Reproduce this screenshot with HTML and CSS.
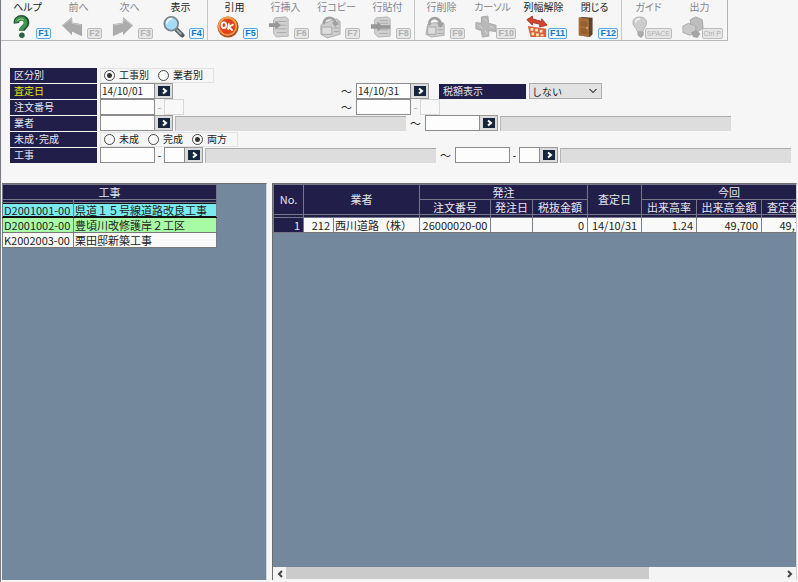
FILE: index.html
```html
<!DOCTYPE html>
<html lang="ja">
<head>
<meta charset="utf-8">
<meta name="viewport" content="width=device-width, initial-scale=1">
<title>査定入力</title>
<link rel="stylesheet" href="styles.css">
</head>
<body>
<div class="window">
<header class="toolbar">
  <div class="group">
    <button class="tool"><span class="name">ヘルプ</span>
      <svg class="icon" viewBox="0 0 24 24"><path d="M7 8C6 0 19 0 18 8c0 4-5 4-5 8" fill="none" stroke="#244d38" stroke-width="6"/><path d="M7 7C7 1 18 1 17 8c0 4-5 4-5 8" fill="none" stroke="#3d9a4d" stroke-width="4"/><circle cx="13" cy="21" r="3" fill="#2c6142"/><path d="M8 5q3-3 7-1" stroke="#a3d68a" fill="none"/></svg>
      <kbd class="key">F1</kbd></button>
    <button class="tool" disabled><span class="name">前へ</span>
      <svg class="icon" viewBox="0 0 24 24"><path d="M1 10 12 1v6l11 2v13l-5-2-6-3v4z" fill="#a9a9a9"/><path d="M2 10 12 3v5l10 2" fill="none" stroke="#c9c9c9"/></svg>
      <kbd class="key">F2</kbd></button>
    <button class="tool" disabled><span class="name">次へ</span>
      <svg class="icon" viewBox="0 0 24 24"><path d="M23 10 12 1v6L1 9v13l5-2 6-3v4z" fill="#acacac"/><path d="M22 10 12 3v5L2 10" fill="none" stroke="#cfcfcf"/></svg>
      <kbd class="key">F3</kbd></button>
    <button class="tool"><span class="name">表示</span>
      <svg class="icon" viewBox="0 0 24 24"><path d="m14 14 7 7" stroke="#555b62" stroke-width="5" stroke-linecap="round"/><path d="m15 15 5 5" stroke="#a9adb2" stroke-width="2"/><circle cx="9" cy="8.500" r="7.500" fill="#a5dcf7" stroke="#7c8791" stroke-width="2"/><path d="M4 8q1-5 6-5" stroke="#eefaff" stroke-width="2" fill="none"/></svg>
      <kbd class="key">F4</kbd></button>
  </div>
  <div class="group">
    <button class="tool"><span class="name">引用</span>
      <svg class="icon" viewBox="0 0 24 24"><circle cx="12" cy="12" r="11.500" fill="#a84a20"/><circle cx="11.500" cy="11" r="10.500" fill="#f3a04c"/><circle cx="11.500" cy="11.500" r="8.500" fill="#e2441a"/><g fill="none" stroke="#fff" stroke-width="2"><ellipse cx="7.500" cy="10" rx="2.500" ry="3"/><path d="m13 8-1 7M18 9l-5 3 4 4"/></g></svg>
      <kbd class="key">F5</kbd></button>
    <button class="tool" disabled><span class="name">行挿入</span>
      <svg class="icon" viewBox="0 0 24 24"><path d="m8 2 11-1 3 2v19l-13 1-3-4V4z" fill="#d0d0d0" stroke="#b2b2b2"/><path d="M10 6h10M10 10h10M10 14h10M10 18h10" stroke="#a9a9a9"/><path d="M1 8h7V5l6 5-6 5v-3H1z" fill="#979797"/></svg>
      <kbd class="key">F6</kbd></button>
    <button class="tool" disabled><span class="name">行コピー</span>
      <svg class="icon" viewBox="0 0 24 24"><path d="m5 8 14-5 4 3v14l-14 4-7-4V10z" fill="#cecece" stroke="#adadad"/><path d="M3 12h11v8H3zM16 9h6M16 13h6M16 17h6" fill="#ddd" stroke="#a5a5a5"/><path d="M5 9C6 0 17 0 18 8" fill="none" stroke="#a0a0a0" stroke-width="3"/><path d="m14 7 4 5 4-6z" fill="#a0a0a0"/></svg>
      <kbd class="key">F7</kbd></button>
    <button class="tool" disabled><span class="name">行貼付</span>
      <svg class="icon" viewBox="0 0 24 24"><path d="m7 2 12-1 3 2v19l-13 1-4-4V4z" fill="#d0d0d0" stroke="#b2b2b2"/><path d="M10 5h10M10 8h10M10 15h10M10 19h10" stroke="#aaa"/><path d="M12 10h10v4H12zM1 9h7V6l6 6-6 5v-3H1z" fill="#979797"/></svg>
      <kbd class="key">F8</kbd></button>
  </div>
  <div class="group">
    <button class="tool" disabled><span class="name">行削除</span>
      <svg class="icon" viewBox="0 0 24 24"><path d="m4 9 14-3 4 3v12l-14 2-6-3z" fill="#cecece" stroke="#adadad"/><path d="M4 12h9v8H4zM15 11h6M15 15h6M15 19h6" fill="#ddd" stroke="#a5a5a5"/><path d="M6 10C4 0 18 0 18 9" fill="none" stroke="#a0a0a0" stroke-width="3"/><path d="m14 8 4 5 4-6z" fill="#a0a0a0"/></svg>
      <kbd class="key">F9</kbd></button>
    <button class="tool" disabled><span class="name">カーソル</span>
      <svg class="icon" viewBox="0 0 24 24"><path d="m7 1 7-1 1 8 8 2v7l-8-1v6l-7 1-1-7-6-2V7l6 1z" fill="#b8b8b8" stroke="#a8a8a8"/><path d="m10 3 3 3M4 10l4 3M11 16l2 4M16 11l4 2" stroke="#ddd"/></svg>
      <kbd class="key">F10</kbd></button>
    <button class="tool"><span class="name">列幅解除</span>
      <svg class="icon" viewBox="0 0 24 24"><path d="M2 11 22 14v9L5 23z" fill="#d7613e"/><path d="M5 13h3v3H5zM10 14h3v3h-3zM15 15h3v3h-3zM6 18h3v3H6zM11 19h3v3h-3zM16 20h3v2h-3z" fill="#ffe8b4"/><path d="m1 4 6-4v3l10 3V3l6 7-8 2V9L7 7v3z" fill="#d54530" stroke="#9e382b"/></svg>
      <kbd class="key">F11</kbd></button>
    <button class="tool"><span class="name">閉じる</span>
      <svg class="icon" viewBox="0 0 24 24"><path d="m2 2 4-1 11 1v18l-3 3-12-2z" fill="#5e432d"/><path d="m2 2 11 1v20L2 21z" fill="#a76e37"/><path d="m4 5 7 1v6l-7-1zM4 13l7 1v6l-7-1z" fill="#95602e"/><circle cx="11" cy="13" r="1" fill="#e0c080"/></svg>
      <kbd class="key">F12</kbd></button>
  </div>
  <div class="group">
    <button class="tool" disabled><span class="name">ガイド</span>
      <svg class="icon" viewBox="0 0 24 24"><path d="M7 17C6 12 2 12 2 7c0-8 15-8 15 0 0 5-3 5-4 10z" fill="#cdcdcd" stroke="#b2b2b2"/><path d="M7 17h7v4l-3 3-4-3z" fill="#aaa"/><path d="M5 7q1-4 5-4" stroke="#eee" stroke-width="2" fill="none"/></svg>
      <kbd class="key">SPACE</kbd></button>
    <button class="tool" disabled><span class="name">出力</span>
      <svg class="icon" viewBox="0 0 24 24"><path d="m9 4 6-3 7 3 1 9-7 5-6-3z" fill="#bdbdbd" stroke="#a3a3a3"/><path d="m1 11 6-3 8 3v6l-6 4-8-3z" fill="#c9c9c9" stroke="#a9a9a9"/><path d="m10 18 5-3 5 4-3 5-5-1z" fill="#a5a5a5"/></svg>
      <kbd class="key">Ctrl P</kbd></button>
  </div>
</header>

<form class="criteria">
  <div class="row">
    <span class="label">区分別</span>
    <div class="choices">
      <label><input type="radio" name="kind" checked>工事別</label>
      <label><input type="radio" name="kind">業者別</label>
    </div>
  </div>
  <div class="row">
    <label class="label active" for="date-from">査定日</label>
    <div class="span wide">
      <input class="box" id="date-from" value="14/10/01"><button type="button" class="pick" aria-label="開始日を選択"><svg viewBox="0 0 12 9"><path d="m5 2 3 2.500L5 7"/></svg></button>
    </div>
    <span class="to">～</span>
    <div class="span">
      <input class="box" aria-label="査定日 終了" value="14/10/31"><button type="button" class="pick" aria-label="終了日を選択"><svg viewBox="0 0 12 9"><path d="m5 2 3 2.500L5 7"/></svg></button>
    </div>
    <label class="label tax" for="tax">税額表示</label>
    <select class="drop" id="tax"><option>しない</option><option>する</option></select>
  </div>
  <div class="row">
    <label class="label" for="order-from">注文番号</label>
    <div class="span wide"><input class="box" id="order-from"><span class="dash faint">-</span><input class="branch" aria-label="注文番号 枝番" disabled></div>
    <span class="to">～</span>
    <div class="span"><input class="box" aria-label="注文番号 終了"><span class="dash faint">-</span><input class="branch" aria-label="注文番号 終了 枝番" disabled></div>
  </div>
  <div class="row">
    <label class="label" for="vendor-from">業者</label>
    <input class="box" id="vendor-from"><button type="button" class="pick" aria-label="業者を選択"><svg viewBox="0 0 12 9"><path d="m5 2 3 2.500L5 7"/></svg></button>
    <output class="result"></output>
    <span class="to">～</span>
    <input class="box" aria-label="業者 終了"><button type="button" class="pick" aria-label="終了業者を選択"><svg viewBox="0 0 12 9"><path d="m5 2 3 2.500L5 7"/></svg></button>
    <output class="result"></output>
  </div>
  <div class="row">
    <span class="label">未成･完成</span>
    <div class="choices status">
      <label><input type="radio" name="status">未成</label>
      <label><input type="radio" name="status">完成</label>
      <label><input type="radio" name="status" checked>両方</label>
    </div>
  </div>
  <div class="row">
    <label class="label" for="work-from">工事</label>
    <input class="box" id="work-from"><span class="dash">-</span><input class="sub" aria-label="工事 枝番"><button type="button" class="pick" aria-label="工事を選択"><svg viewBox="0 0 12 9"><path d="m5 2 3 2.500L5 7"/></svg></button>
    <output class="result"></output>
    <span class="to">～</span>
    <input class="box" aria-label="工事 終了"><span class="dash">-</span><input class="sub" aria-label="工事 終了 枝番"><button type="button" class="pick" aria-label="終了工事を選択"><svg viewBox="0 0 12 9"><path d="m5 2 3 2.500L5 7"/></svg></button>
    <output class="result"></output>
  </div>
</form>

<main class="panes">
  <section class="pane works">
    <table class="grid">
      <colgroup><col class="w-code"><col class="w-title"></colgroup>
      <thead>
        <tr><th colspan="2">工事</th></tr>
        <tr class="strip"><td></td><td></td></tr>
      </thead>
      <tbody>
        <tr class="current"><td>D2001001-00</td><td>県道１５号線道路改良工事</td></tr>
        <tr class="done"><td>D2001002-00</td><td>豊頃川改修護岸２工区</td></tr>
        <tr><td>K2002003-00</td><td>栗田邸新築工事</td></tr>
      </tbody>
    </table>
  </section>
  <section class="pane orders">
    <div class="view">
      <table class="grid">
        <colgroup><col class="w-no"><col class="w-id"><col class="w-vendor"><col class="w-order"><col class="w-day"><col class="w-net"><col class="w-date"><col class="w-rate"><col class="w-sum"><col class="w-net"></colgroup>
        <thead>
          <tr><th rowspan="2">No.</th><th rowspan="2" colspan="2">業者</th><th colspan="3">発注</th><th rowspan="2">査定日</th><th colspan="3">今回</th></tr>
          <tr><th>注文番号</th><th>発注日</th><th>税抜金額</th><th>出来高率</th><th>出来高金額</th><th>査定金額</th></tr>
          <tr class="strip"><td></td><td colspan="2"></td><td></td><td></td><td></td><td></td><td></td><td></td><td></td></tr>
        </thead>
        <tbody>
          <tr><th class="num">1</th><td class="num">212</td><td>西川道路（株）</td><td class="mid">26000020-00</td><td></td><td class="num">0</td><td class="mid">14/10/31</td><td class="num">1.24</td><td class="num">49,700</td><td class="num">49,700</td></tr>
        </tbody>
      </table>
    </div>
    <div class="scroll">
      <button class="arrow" aria-label="左へ"><svg viewBox="0 0 8 8"><path d="M6 1 3 4l3 3"/></svg></button>
      <div class="track"><div class="thumb"></div></div>
      <button class="arrow" aria-label="右へ"><svg viewBox="0 0 8 8"><path d="m2 1 3 3-3 3"/></svg></button>
    </div>
  </section>
</main>
</div>
</body>
</html>
```

FILE: styles.css
```css
* { box-sizing: border-box; }

body {
  margin: 0;
  background: #f6f6f6;
  color: #222;
  font: 11px/14px "Noto Sans CJK JP", sans-serif;
}

button, input, select { margin: 0; font: inherit; color: inherit; border-radius: 0; }

.window {
  display: flex;
  flex-direction: column;
  min-height: 100vh;
  border-left: 1px solid #777b88;
}

/* Toolbar */
.toolbar {
  display: flex;
  align-self: flex-start;
  height: 41px;
  padding-left: 1px;
  border-right: 1px solid #b4b4b4;
  border-bottom: 1px solid #b8b8b8;
}

.group { display: flex; padding-right: 1px; margin-right: 1px; border-right: 1px solid #c6c6c6; }
.group:last-child { border: 0; }

.tool {
  position: relative;
  width: 51px;
  padding: 0 0 0 8px;
  border: 0;
  background: none;
  text-align: left;
}

.name {
  display: block;
  height: 14px;
  margin-left: -8px;
  text-align: center;
  white-space: nowrap;
  font-size: 10px;
  line-height: 12px;
  font-feature-settings: "palt";
}

.tool:disabled .name { color: #85858d; }
.icon { display: block; width: 22px; height: 24px; }

.key {
  position: absolute;
  right: 2px;
  bottom: 1px;
  min-width: 15px;
  padding: 0 1px;
  border: 1px solid #55a7e6;
  border-radius: 2px;
  background: #edf7ff;
  color: #1677c8;
  font: bold 9px/9px "Liberation Sans", sans-serif;
  text-align: center;
}

.tool:disabled .key { border-color: #bcbcbc; background: #e6e6e6; color: #b0b0b0; }
.group:last-child .key { font-size: 7px; font-weight: normal; }

/* Search criteria */
.criteria { padding: 26px 0 0 9px; }
.row { display: flex; align-items: center; height: 16px; }

.label {
  flex: none;
  width: 87px;
  height: 15px;
  margin-right: 3px;
  padding-left: 4px;
  background: #211f49;
  color: #e6e6ef;
  font-size: 10px;
  line-height: 14px;
}

.active { color: #e8e800; }
.tax { margin-left: 10px; }

.choices {
  display: flex;
  gap: 9px;
  width: 114px;
  height: 15px;
  padding-left: 3px;
  border: 1px solid #e2e2e2;
}

.status { width: 138px; }
.choices label { display: flex; align-items: center; gap: 4px; font-size: 10px; line-height: 12px; }

.choices input {
  appearance: none;
  width: 11px;
  height: 11px;
  border: 1px solid #444;
  border-radius: 50%;
  background: #fff;
}

.choices input:checked { background: radial-gradient(circle, #333 0 2px, #fff 3px); }

.span { display: flex; flex: none; align-items: center; width: 73px; }
.wide { width: 237px; }

.box, .sub, .branch {
  flex: none;
  width: 55px;
  height: 16px;
  padding: 0 1px 2px;
  border: 1px solid #8c8c8c;
  background: #fdfdfd;
  font-size: 10px;
}

.sub { width: 21px; }
.branch { width: 20px; border-color: #d8d8d8; background: #f8f8f8; }
.dash { flex: none; width: 9px; text-align: center; }
.faint { color: #aaa; }

.pick {
  display: flex;
  flex: none;
  align-items: center;
  justify-content: center;
  width: 18px;
  height: 16px;
  padding: 0;
  border: 1px solid #9a9a9a;
  border-left-width: 0;
  background: #dcdcde;
}

.pick svg { width: 12px; height: 10px; background: #14253c; fill: none; stroke: #fff; stroke-width: 2; }
.to { flex: none; width: 19px; text-align: center; }

.result {
  width: 231px;
  height: 15px;
  margin-left: 2px;
  border-top: 1px solid #aaa;
  border-left: 1px solid #b6b6b6;
  background: #dcdddc;
}

.drop {
  appearance: none;
  width: 73px;
  height: 16px;
  padding: 0 2px;
  border: 1px solid #adadad;
  background:
    linear-gradient(45deg, transparent 50%, #666 50% 65%, transparent 65%) right 8px top 5px / 4px 4px no-repeat,
    linear-gradient(-45deg, transparent 50%, #666 50% 65%, transparent 65%) right 4px top 5px / 4px 4px no-repeat,
    #e2e2e2;
  font-size: 10px;
  line-height: 13px;
}

/* Result panes */
.panes { display: flex; flex: 1; gap: 5px; margin: 20px 1px 2px; }

.pane {
  display: flex;
  flex-direction: column;
  min-width: 0;
  border-top: 1px solid #6e6e6e;
  border-right: 1px solid #d5d5d5;
  background: #73889c;
}

.works { flex: 0 0 265px; }
.orders { flex: 1; border-left: 1px solid #6e6e6e; }
.view { flex: 1; overflow: hidden; }

.grid { table-layout: fixed; width: 0; border-collapse: collapse; }

.grid th, .grid td {
  height: 15px;
  padding: 0 1px;
  border: 1px solid #77778a;
  line-height: 13px;
  white-space: nowrap;
  overflow: hidden;
}

.grid th { background: #211f49; color: #e6e6ef; font-weight: normal; }
.grid tbody td { background: #f9f9f9; border-style: solid dotted; border-color: #777; }
.grid .strip td { height: 3px; line-height: 0; background: #211f49; }
.grid .num { padding-right: 3px; text-align: right; }
.grid .mid { text-align: center; }
.grid .current td { background: #7aeaee; border-top-color: #111; border-bottom-color: #111; box-shadow: inset 0 1px #111, inset 0 -1px #111; }
.grid .done td { background: #a7fba5; }

.w-code { width: 71px; }
.w-title { width: 143px; }
.w-no { width: 30px; }
.w-id { width: 30px; }
.w-vendor { width: 86px; }
.w-order { width: 71px; }
.w-day { width: 42px; }
.w-net { width: 55px; }
.w-date { width: 54px; }
.w-rate { width: 55px; }
.w-sum { width: 65px; }

.works .grid td { font-size: 11px; }

.scroll { display: flex; height: 13px; background: #f4f4f4; }

.arrow {
  display: flex;
  align-items: center;
  justify-content: center;
  width: 13px;
  padding: 0;
  border: 0;
  background: none;
}

.arrow svg { width: 8px; height: 8px; fill: none; stroke: #444; stroke-width: 2; }
.track { flex: 1; }
.thumb { width: 73%; height: 12px; background: #cbcbcb; }
```
